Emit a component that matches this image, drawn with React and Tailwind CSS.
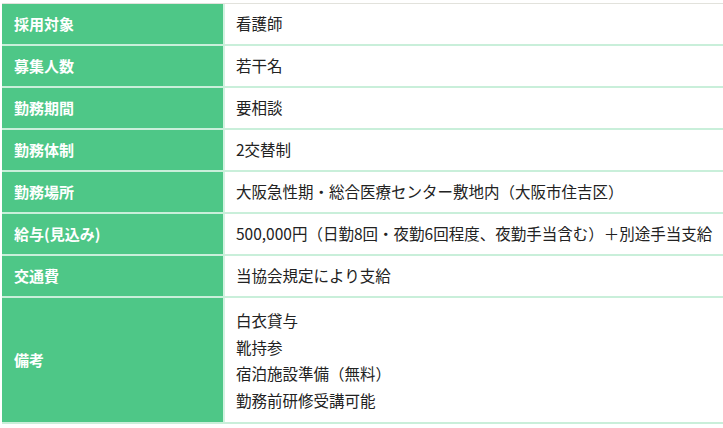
export default function App() {
  const rows = [
    ["採用対象", ["看護師"]],
    ["募集人数", ["若干名"]],
    ["勤務期間", ["要相談"]],
    ["勤務体制", ["2交替制"]],
    ["勤務場所", ["大阪急性期・総合医療センター敷地内（大阪市住吉区）"]],
    ["給与(見込み)", ["500,000円（日勤8回・夜勤6回程度、夜勤手当含む）＋別途手当支給"]],
    ["交通費", ["当協会規定により支給"]],
    ["備考", ["白衣貸与", "靴持参", "宿泊施設準備（無料）", "勤務前研修受講可能"]],
  ];
  return (
    <div
      className="w-[723px] h-[428px] bg-white overflow-hidden pt-[3px] pl-[2px]"
      style={{ fontFamily: '"Noto Sans CJK JP", "Noto Sans", sans-serif' }}
    >
      <div className="border-t border-[#e2e2dc]">
        {rows.map(([label, vals], i) => {
          const multi = vals.length > 1;
          return (
            <div key={i} className="flex border-b-2 border-[#c9efda]">
              <div className="w-[221px] shrink-0 bg-[#4ec787] text-white font-bold text-[15px] pl-[12px] flex items-center">
                {label}
              </div>
              <div
                className={
                  "flex-1 border-l-2 border-[#d3f2e1] pl-[11px] text-[15.5px] text-[#222] " +
                  (multi ? "py-[9px] leading-[26.5px]" : "h-[40px] flex items-center")
                }
              >
                {multi ? vals.map((v, j) => <div key={j}>{v}</div>) : vals[0]}
              </div>
            </div>
          );
        })}
      </div>
    </div>
  );
}
